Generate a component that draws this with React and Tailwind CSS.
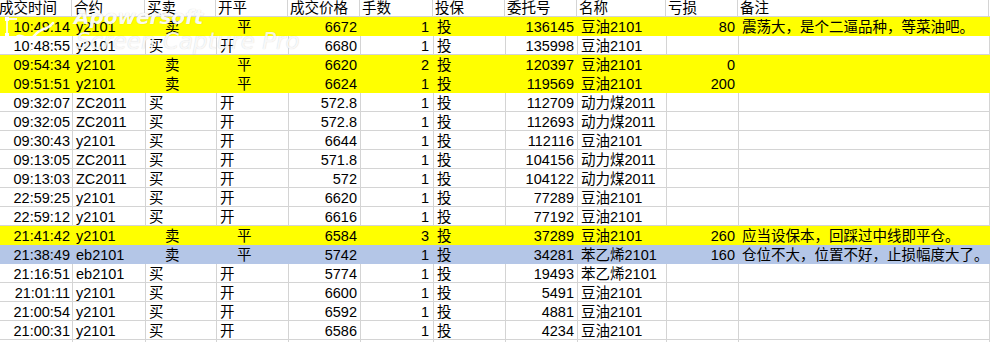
import React from 'react';

const font = { fontFamily: '"Liberation Sans", "Noto Sans CJK SC", sans-serif' };

// column widths + alignment, written out in full so tailwind picks them up
const columns = [
  { w: 'w-[73px]', align: 'text-right pr-[2px]' },
  { w: 'w-[73px]', align: 'text-left pl-[3px]' },
  { w: 'w-[71px]', align: 'text-left pl-[3px]' },
  { w: 'w-[72px]', align: 'text-left pl-[3px]' },
  { w: 'w-[72px]', align: 'text-right pr-[3px]' },
  { w: 'w-[73px]', align: 'text-right pr-[4px]' },
  { w: 'w-[72px]', align: 'text-left pl-[3px]' },
  { w: 'w-[72px]', align: 'text-right pr-[3px]' },
  { w: 'w-[89px]', align: 'text-left pl-[3px]' },
  { w: 'w-[72px]', align: 'text-right pr-[3px]' },
  { w: 'w-[251px]', align: 'text-left pl-[3px]' },
];

const headers = ['成交时间', '合约', '买卖', '开平', '成交价格', '手数', '投保', '委托号', '名称', '亏损', '备注'];

const rows = [
  { fill: 'yellow', c: ['10:49:14', 'y2101', '卖', '平', '6672', '1', '投', '136145', '豆油2101', '80', '震荡大，是个二逼品种，等菜油吧。'] },
  { c: ['10:48:55', 'y2101', '买', '开', '6680', '1', '投', '135998', '豆油2101', '', ''] },
  { fill: 'yellow', c: ['09:54:34', 'y2101', '卖', '平', '6620', '2', '投', '120397', '豆油2101', '0', ''] },
  { fill: 'yellow', c: ['09:51:51', 'y2101', '卖', '平', '6624', '1', '投', '119569', '豆油2101', '200', ''] },
  { c: ['09:32:07', 'ZC2011', '买', '开', '572.8', '1', '投', '112709', '动力煤2011', '', ''] },
  { c: ['09:32:05', 'ZC2011', '买', '开', '572.8', '1', '投', '112693', '动力煤2011', '', ''] },
  { c: ['09:30:43', 'y2101', '买', '开', '6644', '1', '投', '112116', '豆油2101', '', ''] },
  { c: ['09:13:05', 'ZC2011', '买', '开', '571.8', '1', '投', '104156', '动力煤2011', '', ''] },
  { c: ['09:13:03', 'ZC2011', '买', '开', '572', '1', '投', '104122', '动力煤2011', '', ''] },
  { c: ['22:59:25', 'y2101', '买', '开', '6620', '1', '投', '77289', '豆油2101', '', ''] },
  { c: ['22:59:12', 'y2101', '买', '开', '6616', '1', '投', '77192', '豆油2101', '', ''] },
  { fill: 'yellow', c: ['21:41:42', 'y2101', '卖', '平', '6584', '3', '投', '37289', '豆油2101', '260', '应当设保本，回踩过中线即平仓。'] },
  { fill: 'blue', c: ['21:38:49', 'eb2101', '卖', '平', '5742', '1', '投', '34281', '苯乙烯2101', '160', '仓位不大，位置不好，止损幅度大了。'] },
  { c: ['21:16:51', 'eb2101', '买', '开', '5774', '1', '投', '19493', '苯乙烯2101', '', ''] },
  { c: ['21:01:11', 'y2101', '买', '开', '6600', '1', '投', '5491', '豆油2101', '', ''] },
  { c: ['21:00:54', 'y2101', '买', '开', '6592', '1', '投', '4881', '豆油2101', '', ''] },
  { c: ['21:00:31', 'y2101', '买', '开', '6586', '1', '投', '4234', '豆油2101', '', ''] },
];

const fills = {
  yellow: 'bg-[#ffff00] border-transparent',
  blue: 'bg-[#b4c6e7] border-transparent',
};

const wmFont = { fontFamily: '"DejaVu Sans", sans-serif', textShadow: '0 0 1px rgba(0,0,0,0.2)' };

const Watermark = () => (
  <div className="absolute left-0 top-0 pointer-events-none">
    <svg className="absolute left-[3px] top-[15px]" width="60" height="42" viewBox="0 0 60 42" fill="none">
      <g stroke="white" strokeOpacity="0.95" strokeWidth="1.8">
        <path d="M4 4 V37 H56" />
        <path d="M4 4 H14" />
        <path d="M11 25 C18 13 24 31 32 20 C38 12 44 16 50 8" strokeWidth="2.6" strokeLinecap="round" />
      </g>
      <g fill="white">
        <rect x="2" y="2" width="4" height="4" />
        <rect x="2" y="35" width="4" height="4" />
        <rect x="28" y="35" width="4" height="4" />
        <rect x="54" y="35" width="4" height="4" />
        <rect x="2" y="18" width="4" height="4" />
      </g>
    </svg>
    <div
      className="absolute left-[74px] top-[5px] text-[20px] font-bold italic text-white/95 whitespace-nowrap leading-[25px]"
      style={wmFont}
    >
      Apowersoft
    </div>
    <div
      className="absolute left-[76px] top-[27px] text-[23px] italic text-white/85 whitespace-nowrap leading-[28px]"
      style={wmFont}
    >
      Screen Capture Pro
    </div>
  </div>
);

export default function App() {
  return (
    <div className="relative w-[990px] h-[342px] overflow-hidden bg-white text-black text-[14.5px]" style={font}>
      {/* header */}
      <div className="flex h-[17px] border-b border-[#d4d4d4]">
        {headers.map((h, i) => (
          <div
            key={i}
            className={`${columns[i].w} shrink-0 border-r border-[#d4d4d4] leading-[16px] whitespace-nowrap ${i === 0 ? 'pl-0 -ml-[1px]' : 'pl-[2px]'}`}
          >
            {h}
          </div>
        ))}
      </div>

      {/* rows */}
      {rows.map((row, r) => {
        const fill = row.fill ? fills[row.fill] : 'border-[#d4d4d4]';
        return (
          <div key={r} className={`flex h-[19px] border-b ${fill}`}>
            {row.c.map((cell, i) => {
              const indent = row.fill && (i === 2 || i === 3);
              return (
                <div
                  key={i}
                  className={`${columns[i].w} shrink-0 border-r ${row.fill ? 'border-transparent' : 'border-[#d4d4d4]'} pt-[3px] leading-[15px] whitespace-nowrap overflow-visible ${indent ? (i === 2 ? 'pl-[19px]' : 'pl-[20px]') : columns[i].align}`}
                >
                  {cell}
                </div>
              );
            })}
          </div>
        );
      })}

      {/* the row under the last one, cut by the window */}
      <div className="flex h-[19px]">
        {columns.map((c, i) => (
          <div key={i} className={`${c.w} shrink-0 border-r border-[#d4d4d4]`} />
        ))}
      </div>

      <Watermark />
    </div>
  );
}
